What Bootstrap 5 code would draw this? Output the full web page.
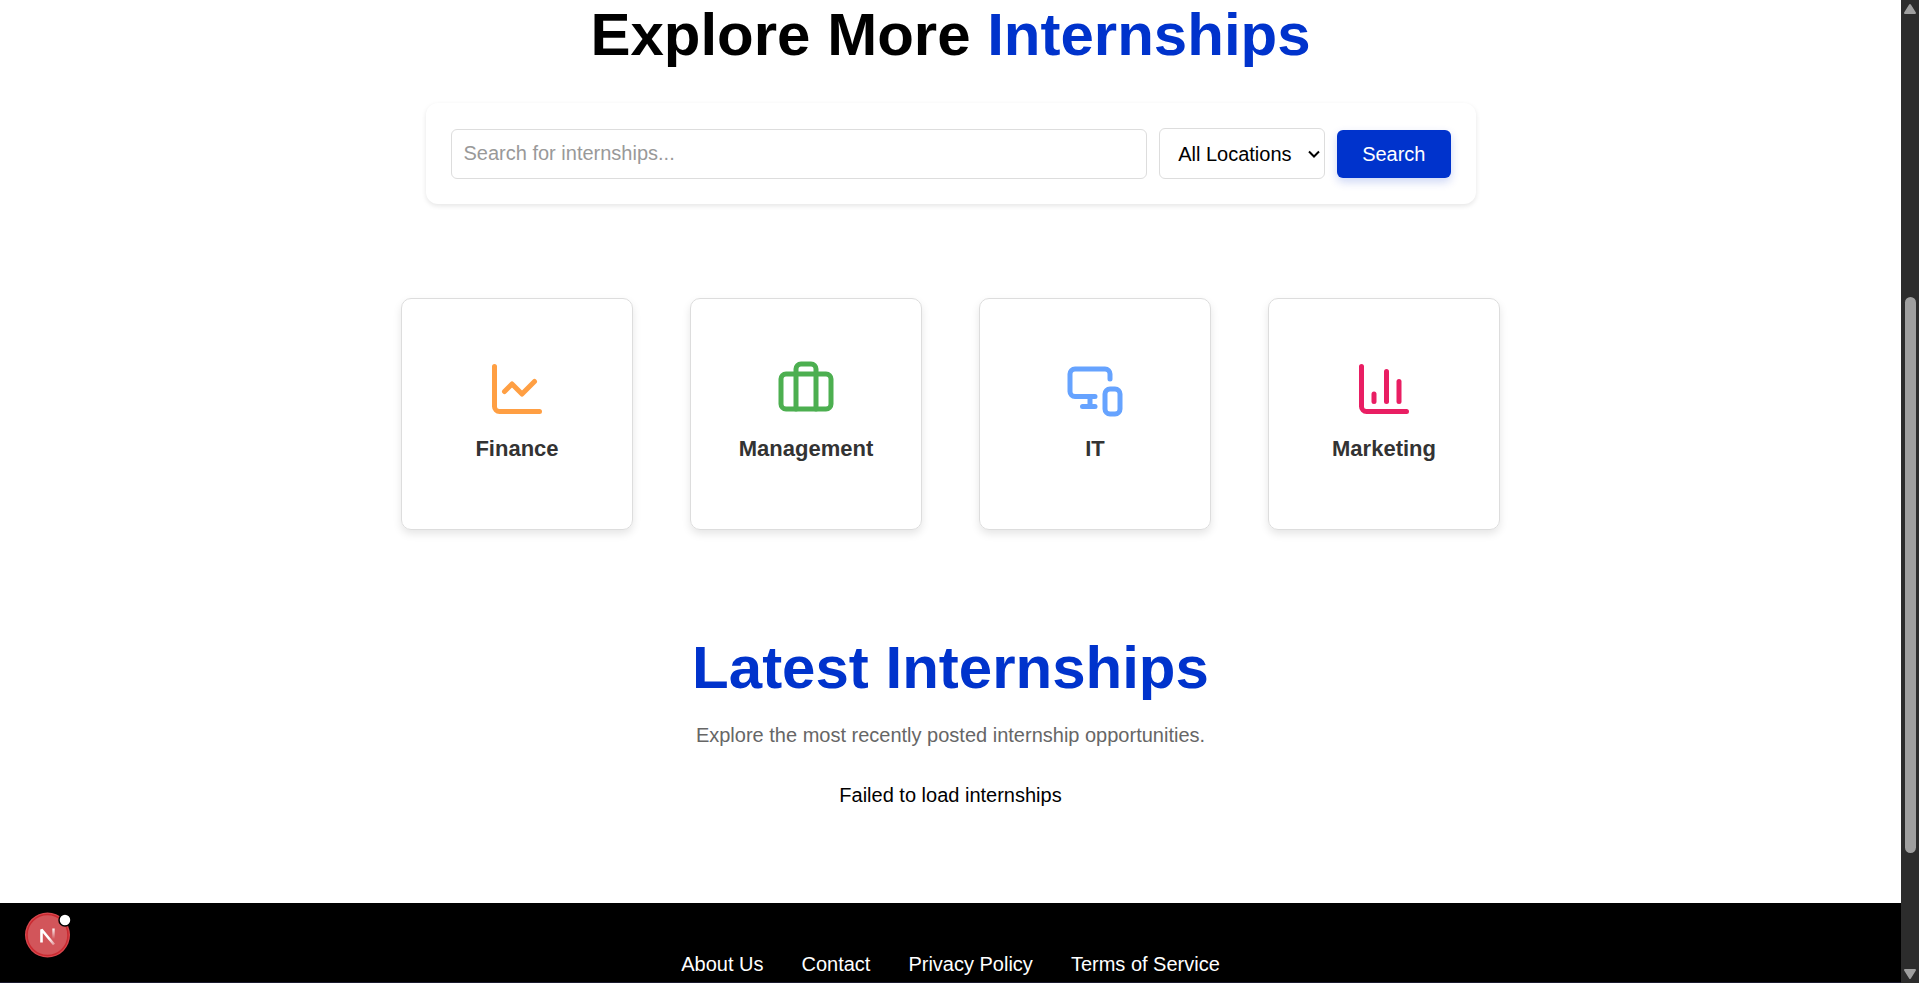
<!DOCTYPE html>
<html lang="en">
<head>
<meta charset="utf-8">
<meta name="viewport" content="width=device-width, initial-scale=1">
<title>Internships</title>
<link href="https://cdn.jsdelivr.net/npm/bootstrap@5.3.0/dist/css/bootstrap.min.css" rel="stylesheet">
<style>
  :root { --brand: #0033cc; }
  body { font-family: "Liberation Sans", Arial, sans-serif; font-size: 20px; line-height: 30px; color: #000; background: #fff; }
  .page-title { font-size: 60px; line-height: 70px; font-weight: 700; }
  .text-brand { color: var(--brand); }
  .search-panel { max-width: 1050px; margin-top: 33px; padding: 25px; gap: 12px; border-radius: 12px; background: #fff; box-shadow: 0 2px 5px rgba(0,0,0,.1); }
  .search-panel .form-control, .search-panel .form-select { font-size: 20px; line-height: 24px; border: 1px solid #ddd; border-radius: 6px; color: #000; }
  .search-panel .form-control { height: 50px; padding: 12px; }
  .search-panel .form-control::placeholder { color: #999; }
  .search-panel .form-select { width: 166px; height: 51px; padding: 12px 16px 12px 18px; background-position: right 4px center; background-size: 12px 8px;
    background-image: url("data:image/svg+xml,%3Csvg xmlns='http://www.w3.org/2000/svg' viewBox='0 0 12 8'%3E%3Cpath d='M1 1.5l5 5 5-5' fill='none' stroke='%23000' stroke-width='2'/%3E%3C/svg%3E"); }
  .btn-search { height: 48px; padding: 0 25px; font-size: 20px; line-height: 24px; color: #fff; background: var(--brand); border: 0; border-radius: 6px; box-shadow: 0 4px 10px rgba(0,51,204,.2); }
  .btn-search:hover { color: #fff; background: #0029a3; }
  .categories { margin-top: 94px; gap: 57px; }
  .category { width: 232px; height: 232px; padding-bottom: 4px; gap: 13px; border: 1px solid #ddd; border-radius: 10px; color: #333; font-size: 22px; line-height: 33px; font-weight: 700; box-shadow: 0 4px 8px rgba(0,0,0,.1); }
  .category svg { width: 60px; height: 60px; fill: none; stroke: currentColor; stroke-width: 2; stroke-linecap: round; stroke-linejoin: round; }
  .finance svg { color: #ff9f43; } .management svg { color: #4caf50; } .it svg { color: #66a3ff; } .marketing svg { color: #e91e63; }
  .latest { margin-top: 103px; padding-bottom: 93px; }
  .latest .intro { color: #666; margin: 17px 0 30px; }
  .site-footer { background: #000; padding-top: 46px; border-bottom: 1px solid #1a1a2e; }
  .site-footer nav { gap: 38px; }
  .site-footer a { color: #fff; text-decoration: none; }
  .scroll-rail { width: 18px; background: #2c2c2c; }
  .scroll-rail .knob { flex: 556 1 0; width: 11px; border-radius: 6px; background: #9f9f9f; }
  .before-knob { flex: 279 1 0; } .after-knob { flex: 112 1 0; }
  .dev-badge { position: fixed; left: 24px; bottom: 24px; width: 47px; height: 47px; padding: 0; border: 0; background: none; }
</style>
</head>
<body>
<div class="d-flex vh-100 overflow-hidden">
  <div class="flex-grow-1 d-flex flex-column">
    <main class="d-flex flex-column align-items-center text-center">
      <h1 class="page-title m-0">Explore More <span class="text-brand">Internships</span></h1>
      <form class="search-panel w-100 d-flex align-items-center" role="search">
        <input class="form-control flex-grow-1 w-auto" type="search" placeholder="Search for internships..." aria-label="Search for internships">
        <select class="form-select flex-shrink-0" aria-label="Location"><option>All Locations</option></select>
        <button class="btn btn-search flex-shrink-0" type="button">Search</button>
      </form>
      <section class="categories d-flex flex-wrap justify-content-center" aria-label="Categories">
        <a href="#" class="category finance d-flex flex-column align-items-center justify-content-center text-decoration-none">
          <svg viewBox="0 0 24 24"><path d="M3 3v16a2 2 0 0 0 2 2h16"/><path d="m19 9-5 5-4-4-3 3"/></svg>Finance</a>
        <a href="#" class="category management d-flex flex-column align-items-center justify-content-center text-decoration-none">
          <svg viewBox="0 0 24 24"><path d="M16 20V4a2 2 0 0 0-2-2h-4a2 2 0 0 0-2 2v16"/><rect width="20" height="14" x="2" y="6" rx="2"/></svg>Management</a>
        <a href="#" class="category it d-flex flex-column align-items-center justify-content-center text-decoration-none">
          <svg viewBox="0 0 24 24"><path d="M18 8V6a2 2 0 0 0-2-2H4a2 2 0 0 0-2 2v7a2 2 0 0 0 2 2h8"/><path d="M10 19v-3.96 3.15"/><path d="M7 19h5"/><rect width="6" height="10" x="16" y="12" rx="2"/></svg>IT</a>
        <a href="#" class="category marketing d-flex flex-column align-items-center justify-content-center text-decoration-none">
          <svg viewBox="0 0 24 24"><path d="M3 3v16a2 2 0 0 0 2 2h16"/><path d="M18 17V9"/><path d="M13 17V5"/><path d="M8 17v-3"/></svg>Marketing</a>
      </section>
      <section class="latest">
        <h2 class="page-title text-brand m-0">Latest Internships</h2>
        <p class="intro">Explore the most recently posted internship opportunities.</p>
        <p class="m-0">Failed to load internships</p>
      </section>
    </main>
    <footer class="site-footer flex-grow-1">
      <nav class="d-flex justify-content-center">
        <a href="#">About Us</a><a href="#">Contact</a><a href="#">Privacy Policy</a><a href="#">Terms of Service</a>
      </nav>
    </footer>
  </div>
  <div class="scroll-rail flex-shrink-0 d-flex flex-column align-items-center" aria-hidden="true">
    <svg width="18" height="18" viewBox="0 0 18 18"><path d="M9 5l5 8H4z" fill="#9f9f9f" stroke="#9f9f9f" stroke-width="2" stroke-linejoin="round"/></svg>
    <div class="before-knob"></div><div class="knob"></div><div class="after-knob"></div>
    <svg width="18" height="18" viewBox="0 0 18 18"><path d="M9 13l5-8H4z" fill="#9f9f9f" stroke="#9f9f9f" stroke-width="2" stroke-linejoin="round"/></svg>
  </div>
</div>
<button class="dev-badge" type="button" aria-label="Open developer tools">
  <svg class="d-block" width="47" height="47" viewBox="0 0 47 47">
    <defs>
      <linearGradient id="fadeA" gradientUnits="userSpaceOnUse" x1="17" y1="16" x2="31" y2="33"><stop offset=".6" stop-color="#fff"/><stop offset="1" stop-color="#fff" stop-opacity=".3"/></linearGradient>
      <linearGradient id="fadeB" gradientUnits="userSpaceOnUse" x1="30" y1="16" x2="30" y2="27"><stop offset="0" stop-color="#fff"/><stop offset="1" stop-color="#fff" stop-opacity="0"/></linearGradient>
    </defs>
    <circle cx="23.5" cy="23" r="22.5" fill="#d9484f"/>
    <circle cx="23.5" cy="23" r="20.5" fill="#d2555a" stroke="#ca2a30" stroke-width="1.5"/>
    <path d="M17.5 30.500V17.500L30 32.500" fill="none" stroke="url(#fadeA)" stroke-width="2.6" stroke-linejoin="bevel"/>
    <path d="M29.5 16.500v11" stroke="url(#fadeB)" stroke-width="2.400"/>
    <circle cx="41" cy="8" r="6" fill="#fff" stroke="#000" stroke-width="1.500"/>
  </svg>
</button>
<script src="https://cdn.jsdelivr.net/npm/bootstrap@5.3.0/dist/js/bootstrap.bundle.min.js"></script>
</body>
</html>
